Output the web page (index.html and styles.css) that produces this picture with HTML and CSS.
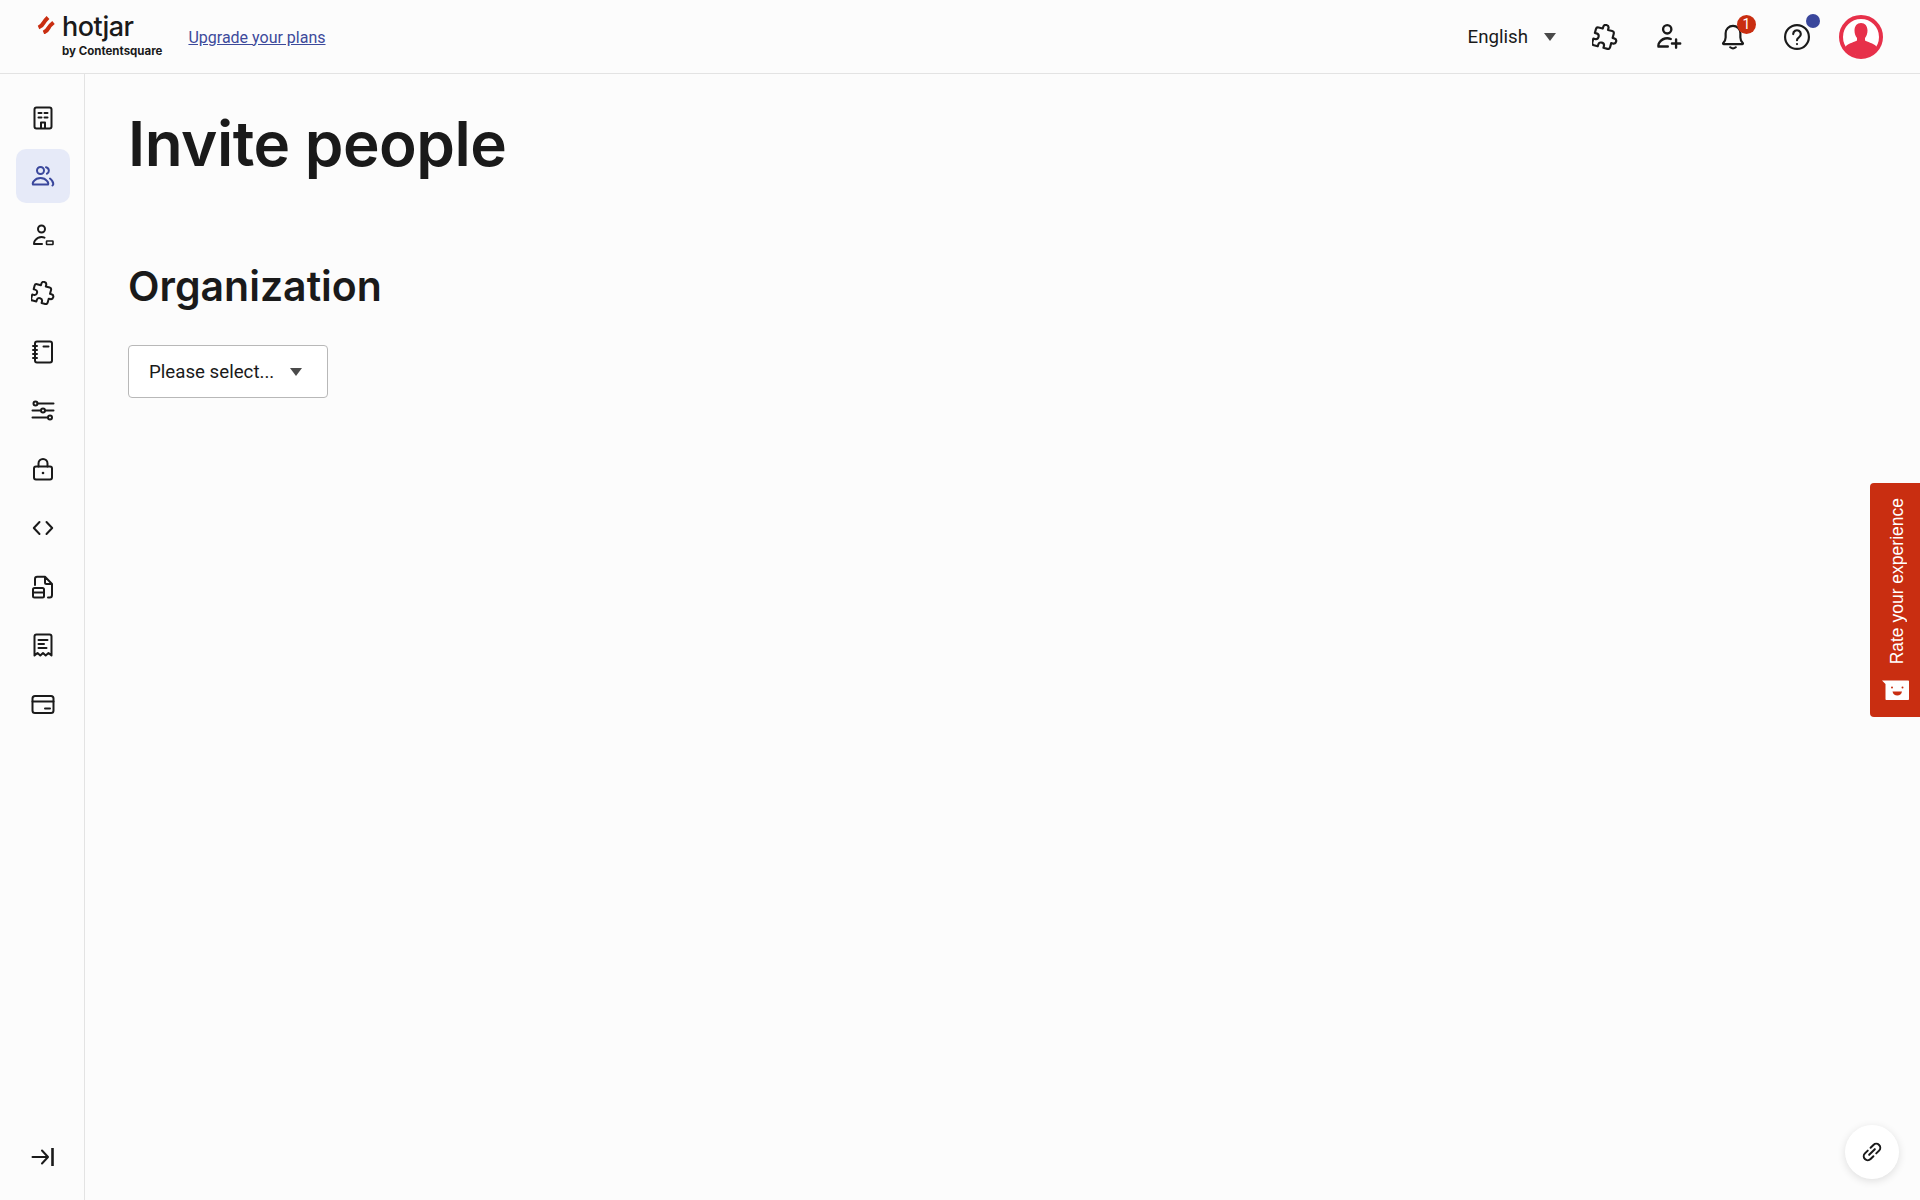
FILE: index.html
```html
<!DOCTYPE html>
<html lang="en">
<head>
    <meta charset="UTF-8"/>
    <meta name="viewport" content="width=device-width, initial-scale=1.0"/>
    <title>Invite people</title>
    <link rel="stylesheet" href="styles.css">
</head>

<body>

    <header class="topbar">
        <div class="topbar-left">
            <a class="logo" href="#">
                <svg class="logo-mark" viewBox="0 0 18 18">
                    <path d="M1.5 11.5C4 10.500 5.500 9 6.500 7S9 3.500 11 1.500" fill="none" stroke="#c92e11" stroke-width="4"/>
                    <path d="M6.500 16.500C9 15.500 10.500 14 11.500 12S14 8.500 16.500 6.500" fill="none" stroke="#c92e11" stroke-width="4"/>
                </svg>
                <span class="logo-text">
                    <span class="logo-name">hotjar</span>
                    <span class="logo-by">by Contentsquare</span>
                </span>
            </a>
            <a class="upgrade-link" href="#">Upgrade your plans</a>
        </div>

        <div class="topbar-right">
            <div class="language">
                <span>English</span>
                <span class="caret"></span>
            </div>
            <button class="top-icon">
                <svg class="icon" viewBox="0 0 24 24"><path transform="rotate(15 12 12)" d="M20.500 11H19V7c0-1.100-.9-2-2-2h-4V3.500C13 2.120 11.880 1 10.500 1S8 2.120 8 3.500V5H4c-1.100 0-2 .9-2 2v3.800h1.500c1.490 0 2.700 1.210 2.700 2.700s-1.210 2.700-2.700 2.700H2V20c0 1.100.9 2 2 2h3.800v-1.500c0-1.490 1.210-2.700 2.700-2.700s2.700 1.210 2.700 2.700V22H17c1.100 0 2-.9 2-2v-4h1.500c1.380 0 2.500-1.120 2.500-2.500S21.880 11 20.500 11z"/></svg>
            </button>
            <button class="top-icon">
                <svg class="icon" viewBox="1 1.500 22 22"><circle cx="10.500" cy="6" r="3.500"/><path d="M3 20c0-1 .3-2.200 1-3 1.500-2 3.700-3.400 6.500-3.400 1 0 2 .2 3 .6M3 20.500h8M18 14.500v7M14.500 18h7"/></svg>
            </button>
            <button class="top-icon">
                <svg class="icon" viewBox="0 0 24 24"><path d="M3 17.500c1.500-1.500 2.200-3 2.200-5V8.500a6.800 6.800 0 0 1 13.600 0v4c0 2 .7 3.500 2.200 5 .4.400.1 1-.5 1H3.500c-.6 0-.9-.6-.5-1zM9.500 21.500c1.500 1.300 3.500 1.300 5 0"/></svg>
                <span class="count-badge">1</span>
            </button>
            <button class="top-icon">
                <svg class="icon" viewBox="0 0 24 24"><circle cx="12" cy="12" r="11"/><path d="M8.500 9.300a3.500 3.500 0 1 1 5.300 3c-1.200.7-1.800 1.300-1.800 2.700"/><circle class="icon-fill" cx="12" cy="18.500" r="1"/></svg>
                <span class="dot-badge"></span>
            </button>
            <div class="avatar">
                <svg viewBox="0 0 44 44">
                    <circle cx="22" cy="22" r="20" fill="#fff" stroke="#e7304a" stroke-width="4"/>
                    <path d="M22 8c4 0 6.500 3 6.500 7.500 0 3-1 5.500-2.500 7.500v2.500c2 1.500 8 2.500 10.500 5 .8.800 1 2 1 2.500-3.500 5-9 7.500-15.500 7.500S10 37.500 6.500 33c0-.5.200-1.700 1-2.500 2.500-2.500 8.500-3.500 10.500-5V23c-1.500-2-2.500-4.500-2.500-7.500C15.500 11 18 8 22 8z" fill="#e7304a"/>
                </svg>
            </div>
        </div>
    </header>

    <div class="layout">
        <nav class="sidebar">
            <div class="nav-list">
                <a class="nav-item" href="#">
                    <svg class="icon" viewBox="0 0 24 24"><rect x="3.500" y="1.500" width="17" height="21" rx="2"/><path d="M7.500 7h3M13.500 7h3M7.500 11.500h3M13.500 11.500h3M10 22v-5.500h4V22"/></svg>
                </a>
                <a class="nav-item active" href="#">
                    <svg class="icon" viewBox="0 0 24 24"><circle cx="9.500" cy="6.500" r="3.500"/><path d="M2 20.500c-.5-1 0-2.500 1-3.500 1.500-2 3.700-3 6.500-3s5 1 6.500 3c1 1 1.500 2.500 1 3.500zM15 3.200a3.500 3.500 0 0 1 1 6.500M19 14.500c2 1.500 3.500 3.500 3.200 6l-.7 1"/></svg>
                </a>
                <a class="nav-item" href="#">
                    <svg class="icon" viewBox="0 0 24 24"><circle cx="10.500" cy="6" r="3.500"/><path d="M3 21c0-1 .3-2.500 1-3.500 1.500-2 3.700-3.500 6.500-3.500 1 0 2 .2 3 .6M3 21h8"/><rect class="icon-thin" x="15.500" y="18" width="6.500" height="3.500" rx=".5"/></svg>
                </a>
                <a class="nav-item" href="#">
                    <svg class="icon" viewBox="0 0 24 24"><path transform="rotate(15 12 12)" d="M20.500 11H19V7c0-1.100-.9-2-2-2h-4V3.500C13 2.120 11.880 1 10.500 1S8 2.120 8 3.500V5H4c-1.100 0-2 .9-2 2v3.800h1.500c1.490 0 2.700 1.210 2.700 2.700s-1.210 2.700-2.700 2.700H2V20c0 1.100.9 2 2 2h3.800v-1.500c0-1.490 1.210-2.700 2.700-2.700s2.700 1.210 2.700 2.700V22H17c1.100 0 2-.9 2-2v-4h1.500c1.380 0 2.500-1.120 2.500-2.500S21.880 11 20.500 11z"/></svg>
                </a>
                <a class="nav-item" href="#">
                    <svg class="icon" viewBox="0 0 24 24"><rect x="4" y="1.500" width="17" height="21" rx="2"/><path d="M2 6h4M2 10h4M2 14h4M2 18h4M12.500 6.500h5"/></svg>
                </a>
                <a class="nav-item" href="#">
                    <svg class="icon" viewBox="0 0 24 24"><circle cx="4.500" cy="4.500" r="2"/><circle cx="12" cy="11.500" r="2"/><circle cx="19" cy="18.500" r="2"/><path d="M6.500 4.500H22.500M1.500 11.500H10M14 11.500H22.500M1.500 18.500H17"/></svg>
                </a>
                <a class="nav-item" href="#">
                    <svg class="icon" viewBox="0 0 24 24"><rect x="3" y="9.500" width="18" height="13" rx="2"/><path d="M7.500 9.500V6.500a4.500 4.500 0 0 1 9 0v3"/><circle class="icon-fill" cx="12" cy="16" r="1.300"/></svg>
                </a>
                <a class="nav-item" href="#">
                    <svg class="icon" viewBox="0 0 24 24"><path d="M8.500 6 2.800 12 8.500 18M15.500 6 21.200 12 15.500 18"/></svg>
                </a>
                <a class="nav-item" href="#">
                    <svg class="icon" viewBox="0 0 24 24"><path d="M4 10V4c0-1.300.9-2.200 2.200-2.200H14L21 9v11c0 1.300-.9 2.500-2.200 2.500H17M14 2v5.500c0 1 .7 1.500 1.500 1.500H21"/><rect x="2" y="13" width="11" height="9.500" rx="1.500"/><path d="M2 17.500h11"/></svg>
                </a>
                <a class="nav-item" href="#">
                    <svg class="icon" viewBox="0 0 24 24"><path d="M3.500 22.500V3.500c0-1.200.8-2 2-2h13c1.200 0 2 .8 2 2v19l-3-2.500-2.800 2.500-2.700-2.500-2.700 2.500L6.500 20z"/><path d="M7.500 7h9M7.500 11h5.500M7.500 15h8"/></svg>
                </a>
                <a class="nav-item" href="#">
                    <svg class="icon" viewBox="0 0 24 24"><rect x="1.500" y="4" width="21" height="17" rx="2.500"/><path d="M1.500 9.500h21M14 16.500h5"/></svg>
                </a>
            </div>
            <a class="nav-item collapse-btn" href="#">
                <svg class="icon" viewBox="0 0 24 24"><path d="M1.500 12h15M11 5.500l6 6.500-6 6.500"/><path class="icon-heavy" d="M21.500 3v18"/></svg>
            </a>
        </nav>

        <main class="content">
            <h1 class="page-title">Invite people</h1>
            <h2 class="section-title">Organization</h2>
            <div class="select-box">
                <span>Please select...</span>
                <span class="caret"></span>
            </div>
        </main>
    </div>

    <button class="feedback-tab">
        <span class="feedback-label">Rate your experience</span>
        <svg class="feedback-face" viewBox="0 0 27 20">
            <path d="M0 .5H26c.6 0 1 .4 1 1V19c0 .6-.4 1-1 1H4.500c-.6 0-1-.4-1-1V4z" fill="#fff"/>
            <circle cx="10" cy="7.500" r="1" fill="#c92e11"/>
            <circle cx="20.500" cy="7.500" r="1" fill="#c92e11"/>
            <path d="M10.500 11.500h9.500c-.4 2.500-2.300 4-4.700 4s-4.400-1.500-4.800-4z" fill="#c92e11"/>
        </svg>
    </button>

    <button class="link-btn">
        <svg class="icon" viewBox="0 0 24 24"><g transform="rotate(-45 12 12)"><path d="M10 8H6a4 4 0 0 0 0 8h4M14 8h4a4 4 0 0 1 0 8h-4M8 12h8"/></g></svg>
    </button>

</body>
</html>
```

FILE: styles.css
```css
* {
    box-sizing: border-box;
}

body {
    margin: 0;
    padding: 0;
    height: 100vh;
    overflow: hidden;
    display: flex;
    flex-direction: column;
    font-family: Roboto, 'Liberation Sans', sans-serif;
    background-color: #fcfcfc;
    color: #1a1a1a;
}

button {
    border: none;
    padding: 0;
    background: none;
    font-family: inherit;
}

.icon {
    display: block;
    width: 24px;
    height: 24px;
    fill: none;
    stroke: #1a1a1a;
    stroke-width: 2;
    stroke-linecap: round;
    stroke-linejoin: round;
}

.icon-fill {
    fill: #1a1a1a;
    stroke: none;
}

.icon-thin {
    stroke-width: 1.6;
}

.icon-heavy {
    stroke-width: 2.6;
    stroke-linecap: butt;
}

.caret {
    width: 0;
    height: 0;
    border-left: 6px solid transparent;
    border-right: 6px solid transparent;
    border-top: 8px solid #4a4a4a;
}

/* top bar */
.topbar {
    display: flex;
    justify-content: space-between;
    align-items: center;
    flex-shrink: 0;
    height: 74px;
    padding: 1px 37px 0 37px;
    border-bottom: 1.5px solid #e3e3e3;
}

.topbar-left {
    display: flex;
    align-items: center;
}

.logo {
    display: flex;
    align-items: flex-start;
    text-decoration: none;
    color: #1a1a1a;
}

.logo-mark {
    width: 18px;
    height: 18px;
    margin-top: 0;
    margin-right: 7px;
}

.logo-text {
    display: flex;
    flex-direction: column;
}

.logo-name {
    font-family: Inter, sans-serif;
    font-size: 27px;
    font-weight: 500;
    line-height: 28px;
    letter-spacing: -0.5px;
    margin-top: -3px;
}

.logo-by {
    font-family: Inter, sans-serif;
    font-size: 11.5px;
    font-weight: 700;
    line-height: 14px;
    margin-top: 3px;
}

.upgrade-link {
    margin-left: 26px;
    font-size: 16px;
    color: #3d4a9b;
}

.topbar-right {
    display: flex;
    align-items: center;
}

.language {
    display: flex;
    align-items: center;
    gap: 16px;
    font-size: 18.7px;
    margin-right: 17px;
}

.top-icon {
    position: relative;
    display: flex;
    align-items: center;
    justify-content: center;
    width: 64px;
    height: 44px;
}

.top-icon .icon {
    width: 26px;
    height: 26px;
}

.count-badge {
    position: absolute;
    top: 0;
    left: 36px;
    width: 19px;
    height: 19px;
    border-radius: 50%;
    background-color: #c92e11;
    color: #fff;
    font-size: 14px;
    line-height: 19px;
    text-align: center;
}

.dot-badge {
    position: absolute;
    top: -1px;
    left: 41px;
    width: 14px;
    height: 14px;
    border-radius: 50%;
    background-color: #3a479c;
}

.avatar {
    width: 44px;
    height: 44px;
    margin-left: 10px;
}

.avatar svg {
    display: block;
    width: 44px;
    height: 44px;
}

/* sidebar */
.layout {
    display: flex;
    flex: 1;
    min-height: 0;
}

.sidebar {
    display: flex;
    flex-direction: column;
    justify-content: space-between;
    flex-shrink: 0;
    width: 85px;
    padding: 16.5px 15px 16px 16px;
    border-right: 1.5px solid #e3e3e3;
}

.nav-list {
    display: flex;
    flex-direction: column;
    gap: 4.65px;
}

.nav-item {
    display: flex;
    align-items: center;
    justify-content: center;
    width: 54px;
    height: 54px;
    border-radius: 10px;
}

.nav-item.active {
    background-color: #e6eaf8;
}

.nav-item.active .icon {
    stroke: #3a479c;
}

/* page content */
.content {
    flex: 1;
    padding: 30px 43px;
}

.page-title {
    margin: 0;
    font-family: Inter, sans-serif;
    font-size: 62px;
    font-weight: 600;
    line-height: 80px;
    letter-spacing: -0.5px;
    color: #1a1a1a;
}

.section-title {
    margin: 76px 0 0 0;
    font-family: Inter, sans-serif;
    font-size: 41px;
    font-weight: 600;
    line-height: 52px;
    color: #1a1a1a;
}

.select-box {
    display: flex;
    align-items: center;
    justify-content: space-between;
    width: 200px;
    height: 53px;
    margin-top: 33px;
    padding: 0 25px 0 20px;
    border: 1px solid #b8b8b8;
    border-radius: 4px;
    background-color: #fff;
    font-size: 18.7px;
}

/* floating things */
.feedback-tab {
    position: fixed;
    top: 483px;
    right: 0;
    display: flex;
    flex-direction: column;
    align-items: center;
    justify-content: space-between;
    width: 50px;
    height: 234px;
    padding: 15px 0 17px 0;
    border-radius: 4px 0 0 4px;
    background-color: #c92e11;
    color: #fff;
}

.feedback-label {
    writing-mode: vertical-rl;
    transform: rotate(180deg);
    margin-left: 3px;
    font-family: 'Liberation Sans', sans-serif;
    font-size: 17.5px;
    line-height: 22px;
}

.feedback-face {
    display: block;
    width: 27px;
    height: 20px;
}

.link-btn {
    position: fixed;
    top: 1125px;
    left: 1845px;
    display: flex;
    align-items: center;
    justify-content: center;
    width: 54px;
    height: 54px;
    border-radius: 50%;
    background-color: #fff;
    box-shadow: 0 2px 8px rgba(0, 0, 0, 0.12);
}

.link-btn .icon {
    width: 24px;
    height: 24px;
}
```
